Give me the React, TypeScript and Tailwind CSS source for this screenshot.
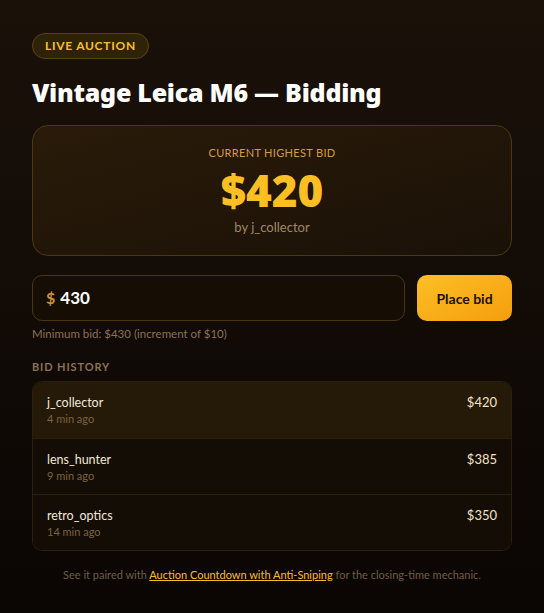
import React, { useState } from 'react';

const bids = [
  { user: 'j_collector', time: '4 min ago', amount: 420 },
  { user: 'lens_hunter', time: '9 min ago', amount: 385 },
  { user: 'retro_optics', time: '14 min ago', amount: 350 },
];

const App = () => {
  const [amount, setAmount] = useState('430');

  return (
    <div
      className="min-h-screen w-full bg-gradient-to-b from-[#1a1109] to-[#0a0604] px-8 pt-8 pb-8 text-white"
      style={{ fontFamily: 'Lato, "Noto Sans", sans-serif' }}
    >
      {/* Header */}
      <span className="inline-flex h-[26px] items-center rounded-full border border-[#5a4214] bg-[#2e2209] px-3 text-[12px] font-bold tracking-[0.06em] text-[#fbbf24]">
        LIVE AUCTION
      </span>
      <h1
        className="mt-[17px] text-[25px] font-black leading-[32px] tracking-[-0.01em] text-white"
        style={{ fontFamily: '"Noto Sans", sans-serif' }}
      >
        Vintage Leica M6 — Bidding
      </h1>

      {/* Current bid card */}
      <div className="mt-[17px] flex h-[131px] flex-col items-center justify-center rounded-2xl border border-[#4e3812] bg-gradient-to-br from-[#2a1b09] to-[#1a1107]">
        <div className="text-[11px] leading-4 tracking-[0.03em] text-[#d39c45]">CURRENT HIGHEST BID</div>
        <div
          className="mt-[1px] text-[44px] font-black leading-[56px] text-[#fbbf24]"
          style={{ fontFamily: '"Noto Sans", sans-serif' }}
        >
          $420
        </div>
        <div className="-mt-[1px] text-[13px] leading-5 text-[#a08866]">by j_collector</div>
      </div>

      {/* Bid input */}
      <div className="mt-[19px] flex gap-3">
        <label className="flex h-[46px] flex-1 items-center gap-[5px] rounded-[10px] border border-[#4a3712] bg-[#160e05] px-[13px]">
          <span className="text-[16px] font-bold text-[#c8923a]">$</span>
          <input
            value={amount}
            onChange={(e) => setAmount(e.target.value)}
            className="w-full bg-transparent text-[17px] font-bold text-white outline-none"
          />
        </label>
        <button className="h-[46px] w-[95px] rounded-[10px] bg-gradient-to-br from-[#fbbf24] to-[#f59e0b] text-[14px] font-bold text-[#1a1005]">
          Place bid
        </button>
      </div>
      <p className="mt-[5px] text-[11.5px] leading-4 text-[#8a7256]">Minimum bid: $430 (increment of $10)</p>

      {/* History */}
      <div className="mt-[17px] text-[11px] font-bold tracking-[0.08em] text-[#8a7256]">BID HISTORY</div>
      <div className="mt-[5px] overflow-hidden rounded-[10px] border border-[#2a1f10]">
        {bids.map((b, i) => (
          <div
            key={b.user}
            className={`flex h-[56px] items-start justify-between px-[14px] pt-[12px] ${
              i === 0 ? 'bg-[#251908]' : 'border-t border-[#2a1f10] bg-[#140d05]'
            }`}
          >
            <div>
              <div className="text-[12.5px] leading-[17px] text-[#f3e9d8]">{b.user}</div>
              <div className="text-[11px] leading-[16px] text-[#7c6440]">{b.time}</div>
            </div>
            <div className="text-[13px] leading-[17px] text-[#f3e2c4]">${b.amount}</div>
          </div>
        ))}
      </div>

      <p className="mt-[16px] text-center text-[11px] text-[#6e5d44]">
        See it paired with{' '}
        <a href="#" className="text-[#fbbf24] underline">
          Auction Countdown with Anti-Sniping
        </a>{' '}
        for the closing-time mechanic.
      </p>
    </div>
  );
};

export default App;
